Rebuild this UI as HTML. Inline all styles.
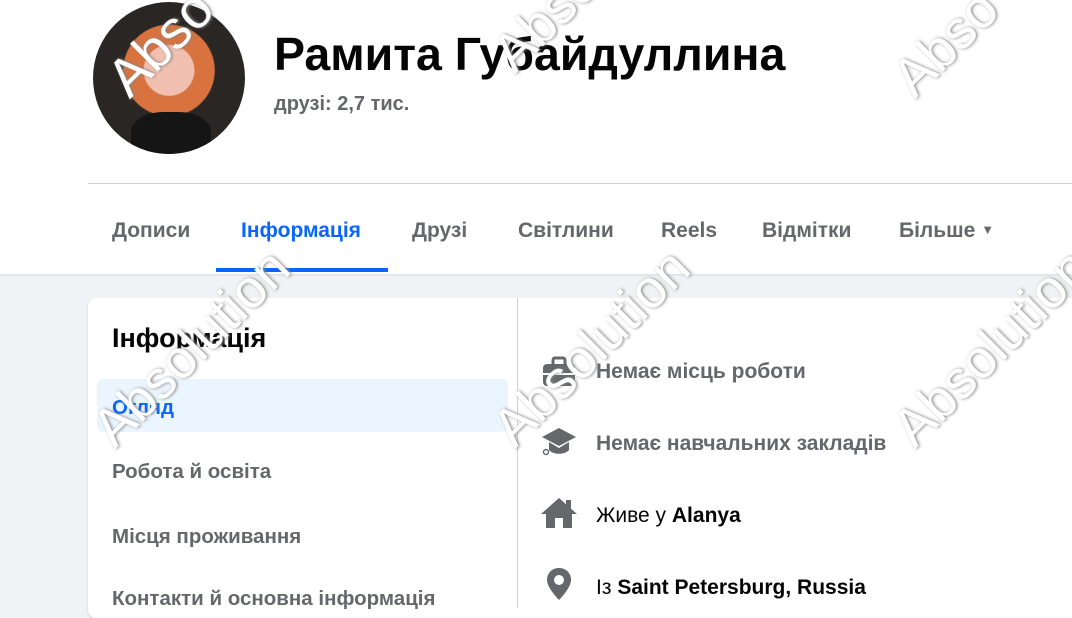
<!DOCTYPE html>
<html><head><meta charset="utf-8"><style>
*{margin:0;padding:0;box-sizing:border-box}
body{width:1072px;height:600px;overflow:hidden;background:#f0f2f5;font-family:"Liberation Sans",sans-serif;position:relative}
.top{position:absolute;left:0;top:0;width:1072px;height:274px;background:#fff;box-shadow:0 1px 2px rgba(0,0,0,.1)}
.av{position:absolute;left:93px;top:2px;width:152px;height:152px;border-radius:50%;background:radial-gradient(circle at 50% 45%,#f2c0b0 0 22%,#d8733f 23% 40%,#2a2624 41% 100%);overflow:hidden}
.av:before{content:"";position:absolute;left:38px;top:110px;width:80px;height:50px;background:#151515;border-radius:40% 40% 0 0}
h1{position:absolute;left:274px;top:27px;font-size:46.5px;font-weight:bold;color:#050505}
.fr{position:absolute;left:274px;top:93px;font-size:20px;font-weight:bold;color:#65676b}
.line{position:absolute;left:88px;top:183px;right:0;height:1px;background:#ced0d4}
.tab{position:absolute;top:219px;font-size:21px;font-weight:bold;color:#65676b}
.act{color:#0866ff}
.ul{position:absolute;left:216px;top:268px;width:172px;height:4px;background:#0866ff}
.card{position:absolute;left:88px;top:298px;width:1000px;height:320px;background:#fff;border-radius:8px;box-shadow:0 1px 2px rgba(0,0,0,.15)}
.sep{position:absolute;left:517px;top:298px;width:1px;height:310px;background:#ced0d4}
.ch{position:absolute;left:112px;top:323px;font-size:27px;font-weight:bold;color:#050505}
.sel{position:absolute;left:97px;top:379px;width:411px;height:53px;background:#ebf5ff;border-radius:6px}
.li{position:absolute;left:112px;font-size:20.5px;font-weight:bold;color:#65676b}
.ri{position:absolute;left:596px;font-size:21px;color:#050505}
.g{color:#65676b;font-weight:bold}
svg.i{position:absolute;left:541px}
.wm{position:absolute;font-size:54px;color:#fff;transform:rotate(-45deg);text-shadow:1px 1px 3px #888;transform-origin:left top}
</style></head><body>
<div class="top">
<div class="av"></div>
<h1>Рамита Губайдуллина</h1>
<div class="fr">друзі: 2,7 тис.</div>
<div class="line"></div>
<div class="tab" style="left:112px">Дописи</div>
<div class="tab act" style="left:241px">Інформація</div>
<div class="tab" style="left:412px">Друзі</div>
<div class="tab" style="left:518px">Світлини</div>
<div class="tab" style="left:661px">Reels</div>
<div class="tab" style="left:762px">Відмітки</div>
<div class="tab" style="left:899px">Більше <span style="font-size:13px;vertical-align:3px">▼</span></div>
<div class="ul"></div>
</div>
<div class="card"></div>
<div class="sep"></div>
<div class="ch">Інформація</div>
<div class="sel"></div>
<div class="li" style="top:396px;color:#0866ff">Огляд</div>
<div class="li" style="top:460px">Робота й освіта</div>
<div class="li" style="top:525px">Місця проживання</div>
<div class="li" style="top:587px">Контакти й основна інформація</div>
<svg class="i" style="top:356px" width="36" height="32" viewBox="0 0 36 32"><rect x="2" y="8" width="32" height="22" rx="4" fill="#65676b"/><rect x="12" y="2" width="12" height="8" rx="2" fill="none" stroke="#65676b" stroke-width="3"/><rect x="2" y="17" width="32" height="2" fill="#fff"/></svg>
<div class="ri g" style="top:360px">Немає місць роботи</div>
<svg class="i" style="top:426px" width="36" height="34" viewBox="0 0 36 34"><path d="M18 2 35 11 18 20 1 11z" fill="#65676b"/><path d="M8 16v8c4 5 16 5 20 0v-8l-10 6z" fill="#65676b"/><circle cx="5" cy="26" r="2.5" fill="none" stroke="#65676b" stroke-width="1.5"/></svg>
<div class="ri g" style="top:432px">Немає навчальних закладів</div>
<svg class="i" style="top:496px" width="36" height="34" viewBox="0 0 36 34"><path d="M18 2 36 18h-5v14H22V22h-8v10H5V18H0z" fill="#65676b"/><rect x="25" y="4" width="5" height="9" fill="#65676b"/></svg>
<div class="ri" style="top:504px">Живе у <b>Alanya</b></div>
<svg class="i" style="top:566px" width="36" height="36" viewBox="0 0 36 36"><path d="M18 2c-7 0-12 5-12 12 0 8 12 20 12 20s12-12 12-20c0-7-5-12-12-12z" fill="#65676b"/><circle cx="18" cy="14" r="5" fill="#fff"/></svg>
<div class="ri" style="top:576px">Із <b>Saint Petersburg, Russia</b></div>
<div class="wm" style="left:95px;top:65px">Abso</div>
<div class="wm" style="left:80px;top:415px">Absolution</div>
<div class="wm" style="left:480px;top:415px">Absolution</div>
<div class="wm" style="left:880px;top:415px">Absolution</div>
<div class="wm" style="left:880px;top:65px">Abso</div>
<div class="wm" style="left:480px;top:40px">Abso</div>
</body></html>
